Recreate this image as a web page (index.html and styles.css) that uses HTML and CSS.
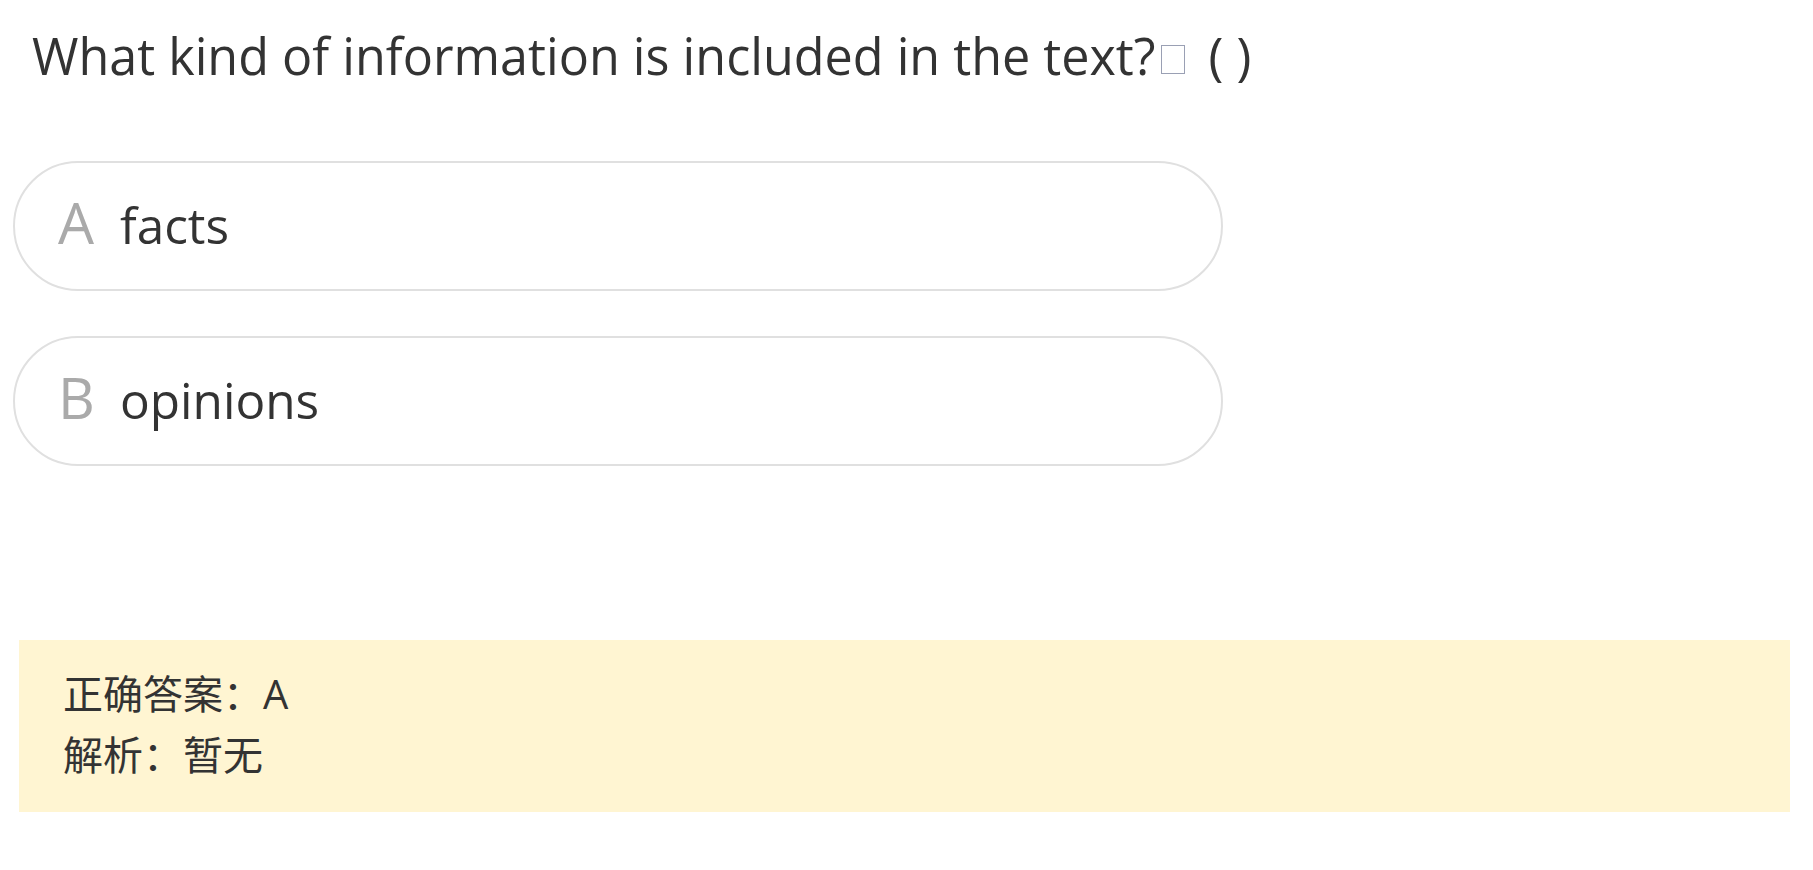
FILE: index.html
```html
<!DOCTYPE html>
<html lang="zh">
<head>
<meta charset="utf-8">
<title>题目</title>
<link rel="stylesheet" href="styles.css">
</head>
<body>
<div class="page">
  <div class="question">What kind of information is included in the text?<span class="tofu"></span> ( )</div>
  <div class="options">
    <div class="option"><span class="content"><span class="label">A</span><span class="text">facts</span></span></div>
    <div class="option"><span class="content"><span class="label">B</span><span class="text">opinions</span></span></div>
  </div>
  <div class="answer">
    <div class="line">正确答案：A</div>
    <div class="line">解析：暂无</div>
  </div>
</div>
</body>
</html>
```
FILE: styles.css
```css
html, body {
  margin: 0;
  padding: 0;
  background: #ffffff;
}
.page {
  font-family: "Open Sans", "Noto Sans CJK SC", sans-serif;
  color: #333333;
  padding-top: 26px;
}
.question {
  font-size: 50.3px;
  line-height: 60px;
  padding-left: 32px;
  white-space: nowrap;
}
.tofu {
  display: inline-block;
  width: 22px;
  height: 27px;
  border: 1px solid #9aa0b4;
  margin-left: 6px;
  margin-right: 10px;
  vertical-align: 1px;
}
.options {
  margin-top: 75px;
  margin-left: 13px;
  width: 1210px;
  display: flex;
  flex-direction: column;
  gap: 45px;
}
.option {
  box-sizing: border-box;
  height: 130px;
  border: 2px solid #e0e0e0;
  border-radius: 65px;
  display: flex;
  align-items: center;
  padding-left: 43px;
}
.content {
  line-height: 70px;
  white-space: nowrap;
  margin-top: 8px;
}
.label {
  display: inline-block;
  color: #aaaaaa;
  width: 62px;
  font-size: 57px;
}
.text {
  color: #333333;
  font-size: 49.5px;
}
.answer {
  margin: 174px 23px 0 19px;
  background: #fff5d2;
  padding: 23px 44px 27px;
  font-size: 40px;
  line-height: 61px;
}
```
